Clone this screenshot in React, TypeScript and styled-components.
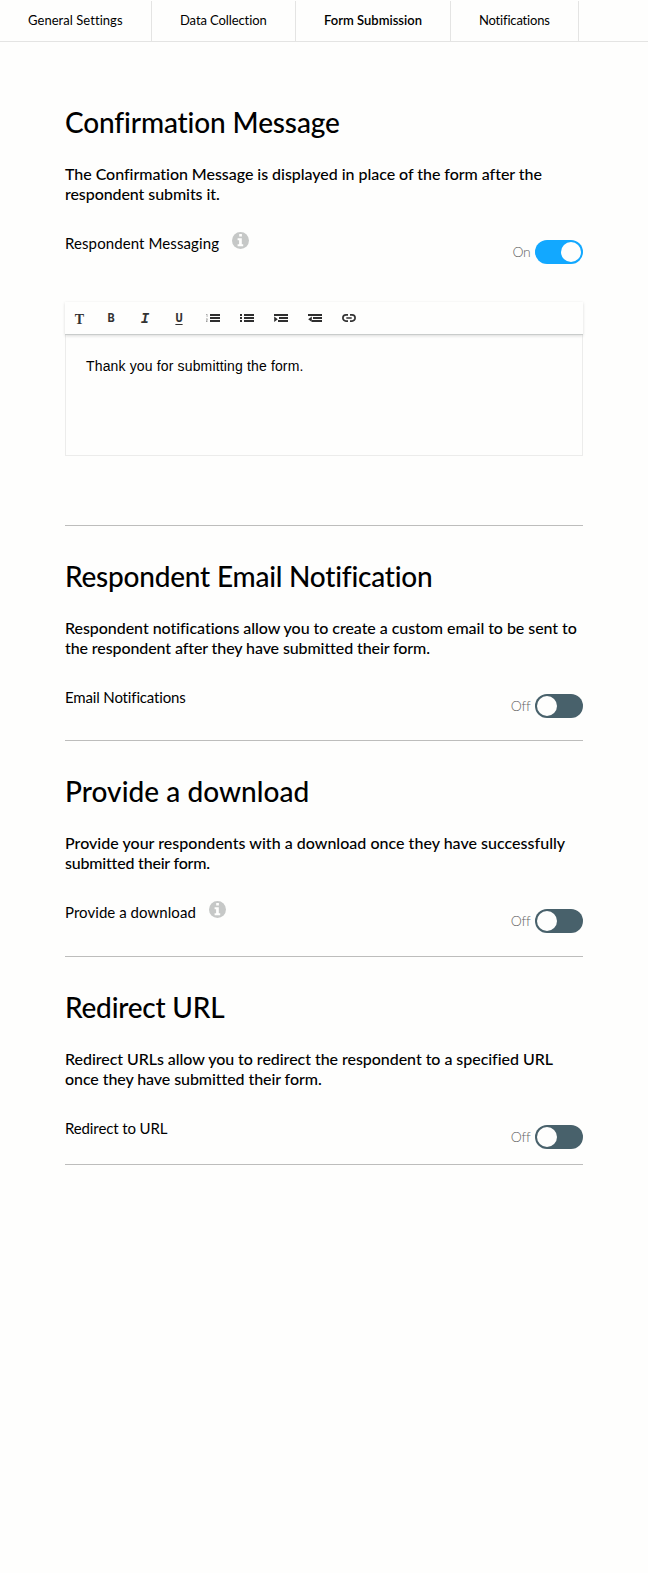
import React from "react";
import styled, { createGlobalStyle } from "styled-components";

const GlobalStyle = createGlobalStyle`
  * { box-sizing: border-box; }
  body {
    margin: 0;
    background: #fefefd;
    color: #000;
    font-family: Lato, "Open Sans", sans-serif;
    font-variant-ligatures: none;
  }
  h2, p { margin: 0; }
`;

const Page = styled.div`
  min-height: 1573px;
  padding-top: 1px;
`;

const Tabs = styled.nav`
  display: flex;
  height: 41px;
  border-bottom: 1px solid #e4e4e3;
`;

const Tab = styled.div<{ $width: number; $active?: boolean; $track?: number }>`
  flex: none;
  width: ${(p) => p.$width}px;
  padding-left: 28px;
  border-right: 1px solid #e4e4e3;
  font-size: 13px;
  line-height: 38px;
  font-weight: ${(p) => (p.$active ? 600 : 400)};
  letter-spacing: ${(p) => p.$track ?? 0}px;
  white-space: nowrap;
`;

const Content = styled.main`
  width: 518px;
  margin-left: 65px;
  padding-top: 30px;
`;

const Section = styled.section<{ $height: number }>`
  display: flex;
  flex-direction: column;
  height: ${(p) => p.$height}px;
  padding-top: 33px;
  border-bottom: 1px solid #bdbdbc;
`;

const Heading = styled.h2<{ $track?: number }>`
  font-size: 28px;
  line-height: 34px;
  font-weight: 500;
  letter-spacing: ${(p) => p.$track ?? 0}px;
  white-space: nowrap;
`;

const Description = styled.p`
  margin-top: 25px;
  font-size: 16px;
  line-height: 20px;
  font-weight: 500;
`;

const Line = styled.span<{ $track?: number }>`
  display: block;
  letter-spacing: ${(p) => p.$track ?? 0}px;
  white-space: nowrap;
`;

const SettingRow = styled.div`
  display: flex;
  justify-content: space-between;
  height: 37px;
  margin-top: 26px;
`;

const Label = styled.div<{ $track?: number }>`
  display: flex;
  gap: 13px;
  margin-top: 1px;
  font-size: 15px;
  line-height: 24px;
  letter-spacing: ${(p) => p.$track ?? 0}px;
  white-space: nowrap;
`;

const SwitchGroup = styled.div`
  display: flex;
  align-items: center;
  gap: 4.5px;
  height: 24px;
  margin-top: 10px;
  color: #666;
  font-size: 14px;
  font-weight: 300;
  line-height: 24px;
  letter-spacing: -0.3px;
`;

const Switch = styled.span<{ $on?: boolean }>`
  display: flex;
  justify-content: ${(p) => (p.$on ? "flex-end" : "flex-start")};
  width: 48px;
  height: 24px;
  padding: 2px;
  border-radius: 12px;
  background: ${(p) => (p.$on ? "#12a8ff" : "#48616b")};
`;

const Knob = styled.span`
  width: 20px;
  height: 20px;
  border-radius: 50%;
  background: #fefefd;
`;

const Editor = styled.div`
  display: flex;
  flex-direction: column;
  margin-top: 35px;
`;

const Toolbar = styled.div`
  position: relative;
  display: flex;
  height: 33px;
  background: #fefefd;
  border-bottom: 1px solid #c9cccb;
  box-shadow: 0 1px 3px rgba(0, 0, 0, 0.14);
`;

const Tool = styled.span<{ $first?: boolean }>`
  display: flex;
  align-items: center;
  justify-content: center;
  flex: none;
  width: ${(p) => (p.$first ? 29 : 34)}px;
  color: #333;
`;

const SerifGlyph = styled.span`
  padding-top: 3px;
  font: bold 14px/16px "Liberation Serif", serif;
`;

const MonoGlyph = styled.span<{ $variant?: "italic" | "underline" }>`
  font: bold 12px/14px "DejaVu Sans Mono", monospace;
  ${(p) => p.$variant === "italic" && `padding-top: 2px; font: italic bold 14px/14px "Liberation Mono", monospace;`}
  ${(p) => p.$variant === "underline" && "text-decoration: underline; text-underline-offset: 2px;"}
`;

const EditorBody = styled.div`
  height: 121px;
  padding: 22px 20px;
  border: 1px solid #ececeb;
  border-top: 0;
  font-family: "Liberation Sans", Arial, sans-serif;
  font-size: 14px;
  line-height: 18px;
  letter-spacing: 0.15px;
`;

const Glyph = styled.svg`
  display: block;
`;

const InfoGlyph = styled.svg`
  display: block;
  margin-top: 1px;
`;

function InfoIcon() {
  return (
    <InfoGlyph width="17" height="17" viewBox="0 0 17 17">
      <circle cx="8.5" cy="8.5" r="8.5" fill="#c6c8c7" />
      <path
        fill="#fefefd"
        d="M7.2 1.9h2.7v2.6H7.2zM5.6 6.2h4.2v6h1.4v2H5.6v-2h1.5v-4H5.6z"
      />
    </InfoGlyph>
  );
}

type ListKind = "ordered" | "bullet" | "indent" | "outdent";

function ListIcon({ kind }: { kind: ListKind }) {
  const full = kind === "indent" || kind === "outdent";
  return (
    <Glyph width="14" height="8" viewBox="0 0 14 8" fill="#2e2e2e">
      <path d={full ? "M0 0h14v2H0zM5 3h9v2H5zM4 6h10v2H4z" : "M4 0h10v2H4zM4 3h10v2H4zM4 6h10v2H4z"} />
      {kind === "bullet" && <path d="M0 0h2v2H0zM0 3h2v2H0zM0 6h2v2H0z" />}
      {kind === "ordered" && (
        <path fill="#9a9a9a" d="M0 0h1.4v3H.7V.8H0zM0 4.600h1.600v1.600L.8 7.200h.8V8H0v-1l.9-1.200v-.4H0z" />
      )}
      {kind === "indent" && <path d="M.2 2.500 3.800 5.200.2 8z" />}
      {kind === "outdent" && <path d="M3.800 2.500.2 5.200 3.800 8z" />}
    </Glyph>
  );
}

function LinkIcon() {
  return (
    <Glyph width="14" height="8" viewBox="0 0 14 8" fill="none" stroke="#333" strokeWidth="1.7">
      <path d="M6 .9H4a3.100 3.100 0 0 0 0 6.200h2M8 .9H10a3.100 3.100 0 0 1 0 6.200H8M4.300 4h5.400" />
    </Glyph>
  );
}

function Toggle({ on }: { on?: boolean }) {
  return (
    <SwitchGroup>
      {on ? "On" : "Off"}
      <Switch $on={on}>
        <Knob />
      </Switch>
    </SwitchGroup>
  );
}

export default function App() {
  return (
    <>
      <GlobalStyle />
      <Page>
        <Tabs>
          <Tab $width={152} $track={0.05}>General Settings</Tab>
          <Tab $width={144} $track={-0.1}>Data Collection</Tab>
          <Tab $width={155} $active>Form Submission</Tab>
          <Tab $width={128} $track={-0.18}>Notifications</Tab>
        </Tabs>
        <Content>
          <Section $height={454}>
            <Heading $track={-0.13}>Confirmation Message</Heading>
            <Description>
              <Line $track={-0.04}>The Confirmation Message is displayed in place of the form after the</Line>
              <Line $track={-0.08}>respondent submits it.</Line>
            </Description>
            <SettingRow>
              <Label $track={0.1}>
                Respondent Messaging
                <InfoIcon />
              </Label>
              <Toggle on />
            </SettingRow>
            <Editor>
              <Toolbar>
                <Tool $first><SerifGlyph>T</SerifGlyph></Tool>
                <Tool><MonoGlyph>B</MonoGlyph></Tool>
                <Tool><MonoGlyph $variant="italic">I</MonoGlyph></Tool>
                <Tool><MonoGlyph $variant="underline">U</MonoGlyph></Tool>
                <Tool><ListIcon kind="ordered" /></Tool>
                <Tool><ListIcon kind="bullet" /></Tool>
                <Tool><ListIcon kind="indent" /></Tool>
                <Tool><ListIcon kind="outdent" /></Tool>
                <Tool><LinkIcon /></Tool>
              </Toolbar>
              <EditorBody>Thank you for submitting the form.</EditorBody>
            </Editor>
          </Section>
          <Section $height={215}>
            <Heading $track={-0.22}>Respondent Email Notification</Heading>
            <Description>
              <Line $track={-0.05}>Respondent notifications allow you to create a custom email to be sent to</Line>
              <Line $track={-0.1}>the respondent after they have submitted their form.</Line>
            </Description>
            <SettingRow>
              <Label $track={-0.15}>Email Notifications</Label>
              <Toggle />
            </SettingRow>
          </Section>
          <Section $height={216}>
            <Heading $track={0.04}>Provide a download</Heading>
            <Description>
              <Line $track={0.02}>Provide your respondents with a download once they have successfully</Line>
              <Line $track={-0.2}>submitted their form.</Line>
            </Description>
            <SettingRow>
              <Label $track={0.05}>
                Provide a download
                <InfoIcon />
              </Label>
              <Toggle />
            </SettingRow>
          </Section>
          <Section $height={208}>
            <Heading $track={-0.22}>Redirect URL</Heading>
            <Description>
              <Line $track={-0.045}>Redirect URLs allow you to redirect the respondent to a specified URL</Line>
              <Line $track={-0.08}>once they have submitted their form.</Line>
            </Description>
            <SettingRow>
              <Label $track={-0.12}>Redirect to URL</Label>
              <Toggle />
            </SettingRow>
          </Section>
        </Content>
      </Page>
    </>
  );
}
